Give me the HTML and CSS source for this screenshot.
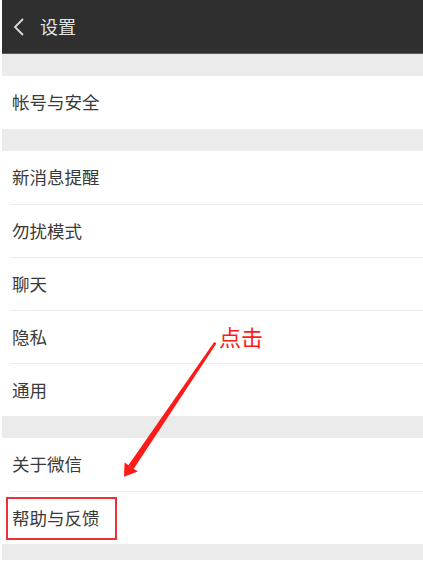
FILE: index.html
```html
<!DOCTYPE html>
<html lang="zh-CN">
<head>
<meta charset="utf-8">
<title>设置</title>
<link rel="stylesheet" href="styles.css">
</head>
<body>
<div class="page">
  <header class="topbar">
    <svg class="back" width="14" height="20" viewBox="0 0 14 20">
      <polyline points="11,2 3,10 11,18" fill="none" stroke="#dcdcdc" stroke-width="1.8" stroke-linejoin="miter"/>
    </svg>
    <span class="title">设置</span>
  </header>
  <div class="gap"></div>
  <div class="group">
    <div class="row">帐号与安全</div>
  </div>
  <div class="gap"></div>
  <div class="group">
    <div class="row">新消息提醒</div>
    <div class="row">勿扰模式</div>
    <div class="row">聊天</div>
    <div class="row">隐私</div>
    <div class="row">通用</div>
  </div>
  <div class="gap"></div>
  <div class="group">
    <div class="row">关于微信</div>
    <div class="row">帮助与反馈</div>
  </div>
  <div class="gap small"></div>

  <div class="highlight"></div>
  <div class="hint">点击</div>
  <svg class="arrow" width="423" height="571" viewBox="0 0 423 571">
    <polygon points="214.2,342 216.4,343.6 133.6,469 128.4,465.2" fill="#ff1a1a"/>
    <polygon points="124,476.8 124.6,462.4 137.8,471.4" fill="#ff1a1a"/>
  </svg>
</div>
</body>
</html>
```

FILE: styles.css
```css
html, body {
  margin: 0;
  padding: 0;
  background: #ffffff;
}

.page {
  position: relative;
  width: 423px;
  height: 571px;
  padding-left: 2px;
  box-sizing: border-box;
  overflow: hidden;
  font-family: "Noto Sans CJK SC", "Noto Sans", sans-serif;
}

.topbar {
  height: 53px;
  background: #2f2f2f;
  border-bottom: 1px solid #5c5c5c;
  display: flex;
  align-items: center;
  padding-left: 10px;
}

.back {
  display: block;
  margin-top: 1px;
}

.title {
  margin-left: 14px;
  font-size: 18px;
  color: #e2e2e2;
  line-height: 1;
  margin-top: -1px;
}

.gap {
  height: 22px;
  background: #ebebeb;
}

.gap.small {
  height: 16px;
}

.group {
  background: #ffffff;
}

.row {
  height: 53px;
  box-sizing: border-box;
  display: flex;
  align-items: center;
  padding-left: 10px;
  padding-bottom: 2px;
  font-size: 17.5px;
  color: #3a3a3a;
}

.row + .row {
  border-top: 1px solid #ececec;
  margin-left: 8px;
  padding-left: 2px;
}

.highlight {
  position: absolute;
  left: 6px;
  top: 497px;
  width: 111px;
  height: 43px;
  box-sizing: border-box;
  border: 2px solid #ec3038;
}

.hint {
  position: absolute;
  left: 219px;
  top: 320px;
  font-size: 22px;
  line-height: 32px;
  color: #ff1a1a;
}

.arrow {
  position: absolute;
  left: 0;
  top: 0;
}
```
